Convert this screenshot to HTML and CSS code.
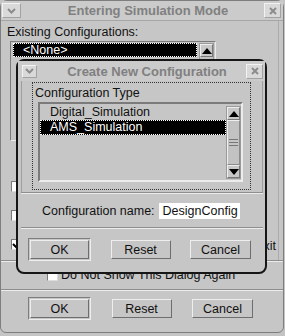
FILE: index.html
```html
<!DOCTYPE html>
<html lang="en">
<head>
    <meta charset="UTF-8">
    <title>Entering Simulation Mode</title>
    <link rel="stylesheet" href="styles.css">
</head>
<body>
    <div class="window outer">
        <div class="titlebar">
            <span class="tb-btn wide">
                <svg width="9" height="6" viewBox="0 0 9 6"><path d="M1 1l3.5 3.5L8 1" stroke="#8c8c8c" stroke-width="2" fill="none"/></svg>
            </span>
            <span class="tb-title">Entering Simulation Mode</span>
            <span class="tb-btn">
                <svg width="8" height="8" viewBox="0 0 8 8"><path d="M1 1l6 6M7 1L1 7" stroke="#8c8c8c" stroke-width="2"/></svg>
            </span>
        </div>

        <div class="panel">
            <div class="label">Existing Configurations:</div>
            <div class="listbox outer-list">
                <div class="rows">
                    <div class="row sel">&lt;None&gt;</div>
                </div>
                <div class="scrollbar">
                    <span class="arrow"><span class="tri up"></span></span>
                </div>
            </div>

            <!-- these rows sit under the second dialog, only the end of the last label peeks out -->
            <div class="checks">
                <div class="check-row"><span class="checkbox"></span></div>
                <div class="check-row"><span class="checkbox"></span></div>
                <div class="check-row"><span class="checkbox on"><svg width="9" height="9" viewBox="0 0 9 9"><path d="M1 4l3 3 4-6" stroke="#000" stroke-width="2" fill="none"/></svg></span><span class="check-label">Exit</span></div>
            </div>
        </div>

        <div class="sep"></div>
        <div class="check-row again"><span class="checkbox"></span><span>Do Not Show This Dialog Again</span></div>
        <div class="sep"></div>

        <div class="buttons outer-buttons">
            <span class="default"><button class="btn">OK</button></span>
            <button class="btn">Reset</button>
            <button class="btn wide">Cancel</button>
        </div>

        <!-- Create New Configuration dialog, on top of the first one -->
        <div class="window inner">
            <div class="titlebar">
                <span class="tb-btn small">
                    <svg width="9" height="6" viewBox="0 0 9 6"><path d="M1 1l3.5 3.5L8 1" stroke="#8c8c8c" stroke-width="2" fill="none"/></svg>
                </span>
                <span class="tb-title">Create New Configuration</span>
                <span class="tb-btn">
                    <svg width="8" height="8" viewBox="0 0 8 8"><path d="M1 1l6 6M7 1L1 7" stroke="#8c8c8c" stroke-width="2"/></svg>
                </span>
            </div>

            <div class="inner-body">
                <div class="section types">
                    <div class="group">
                        <div class="group-label">Configuration Type</div>
                        <div class="listbox type-list">
                            <div class="rows">
                                <div class="row">Digital_Simulation</div>
                                <div class="row sel">AMS_Simulation</div>
                            </div>
                            <div class="scrollbar">
                                <span class="arrow"><span class="tri up"></span></span>
                                <span class="thumb"><span class="grip"></span></span>
                                <span class="arrow"><span class="tri down"></span></span>
                            </div>
                        </div>
                    </div>
                </div>
                <div class="sep"></div>
                <div class="section name-row">
                    <span>Configuration name:</span>
                    <span class="field">DesignConfig</span>
                </div>
                <div class="sep"></div>
                <div class="buttons inner-buttons">
                    <span class="default"><button class="btn">OK</button></span>
                    <button class="btn">Reset</button>
                    <button class="btn wide">Cancel</button>
                </div>
            </div>
        </div>
    </div>
</body>
</html>
```

FILE: styles.css
```css
/* General Reset */
* {
    margin: 0;
    padding: 0;
    box-sizing: border-box;
}

body {
    font-family: "Liberation Sans", Arial, sans-serif;
    font-size: 12.5px;
    color: #111;
    background-color: #c4c4c4;
}

/* Windows */
.window {
    background-color: #c6c6c6;
}

.outer {
    position: relative;
    width: 284px;
    height: 333px;
    border: 1px solid #7e7e7e;
    border-radius: 7px 7px 6px 6px;
}

.inner {
    position: absolute;
    left: 15px;
    top: 58px;
    width: 251px;
    height: 215px;
    border: 2px solid #161616;
    border-radius: 8px;
}

/* Title bars */
.titlebar {
    display: flex;
    align-items: center;
    height: 20px;
    padding: 0 2px 0 1px;
    background-color: #cbcbcb;
}

.outer > .titlebar {
    border-bottom: 1px solid #a6a6a6;
}

.inner .titlebar {
    padding: 0 2px 0 4px;
}

.tb-btn {
    display: flex;
    align-items: center;
    justify-content: center;
    width: 17px;
    height: 15px;
    background-color: #d9d9d9;
    border: 1px solid;
    border-color: #f2f2f2 #a2a2a2 #a2a2a2 #f2f2f2;
}

.tb-btn.wide {
    width: 19px;
}

.tb-btn.small {
    width: 15px;
    height: 13px;
}

.tb-title {
    flex: 1;
    text-align: center;
    padding-left: 11px;
    font-size: 13px;
    font-weight: bold;
    color: #808080;
}

/* Outer dialog body */
.panel {
    width: 278px;
    height: 239px;
    border-right: 1px solid #ababab;
}

.label {
    padding: 4px 0 0 6px;
    line-height: 14px;
}

.sep {
    height: 2px;
    border-top: 1px solid #8e8e8e;
    border-bottom: 1px solid #ececec;
}

/* List boxes */
.listbox {
    display: flex;
    border: 1px solid;
    border-color: #7b7b7b #ececec #ececec #7b7b7b;
}

.rows {
    flex: 1;
}

.row {
    height: 15px;
    line-height: 15px;
    padding-left: 10px;
    white-space: nowrap;
}

.row.sel {
    background-color: #000;
    color: #fff;
    outline: 1px dotted #fff;
    outline-offset: -1px;
}

.outer-list {
    width: 206px;
    height: 100px;
    margin: 2px 0 0 9px;
    padding: 1px 1px 1px 2px;
}

.outer-list .row {
    height: 14px;
    line-height: 14px;
}

.scrollbar {
    display: flex;
    flex-direction: column;
    width: 15px;
    border: 1px solid #9a9a9a;
    background-color: #c2c2c2;
}

.outer-list .scrollbar {
    margin-left: 2px;
}

.arrow {
    display: flex;
    align-items: center;
    justify-content: center;
    height: 13px;
    border: 1px solid;
    border-color: #eeeeee #777 #777 #eeeeee;
    background-color: #c8c8c8;
}

.tri {
    width: 0;
    height: 0;
    border-left: 5px solid transparent;
    border-right: 5px solid transparent;
}

.tri.up {
    border-bottom: 6px solid #000;
}

.tri.down {
    border-top: 6px solid #000;
}

.thumb {
    flex: 1;
    display: flex;
    align-items: center;
    justify-content: center;
    border: 1px solid;
    border-color: #eeeeee #8a8a8a #8a8a8a #eeeeee;
}

.grip {
    width: 9px;
    height: 7px;
    border-top: 1px solid #777;
    border-bottom: 1px solid #777;
    background: linear-gradient(#c6c6c6 2px, #777 2px, #777 3px, #c6c6c6 3px);
}

/* Check boxes */
.checks {
    display: flex;
    flex-direction: column;
    gap: 18px;
    margin-top: 40px;
    padding-left: 10px;
}

.check-row {
    display: flex;
    align-items: center;
    gap: 3px;
    height: 11px;
    white-space: nowrap;
}

.check-label {
    flex: 1;
    text-align: right;
    padding-right: 2px;
    line-height: 14px;
    padding-top: 3px;
}

.checkbox {
    display: flex;
    align-items: center;
    justify-content: center;
    flex: none;
    width: 11px;
    height: 11px;
    background-color: #fff;
    border: 1px solid;
    border-color: #7b7b7b #dddddd #dddddd #7b7b7b;
}

.again {
    height: 12px;
    margin: 7px 0 8px;
    padding-left: 46px;
}

/* Buttons */
.buttons {
    display: flex;
    align-items: center;
    justify-content: space-between;
}

.outer-buttons {
    margin-top: 6px;
    padding: 0 30px 0 27px;
}

.default {
    display: flex;
    padding: 1px;
    border: 1px solid;
    border-color: #7e7e7e #eeeeee #eeeeee #7e7e7e;
}

.btn {
    width: 60px;
    height: 19px;
    font: inherit;
    color: #111;
    background-color: #c6c6c6;
    border: 1px solid;
    border-color: #eeeeee #6e6e6e #6e6e6e #eeeeee;
}

.default .btn {
    width: 59px;
}

.btn.wide {
    width: 61px;
}

/* Inner dialog body */
.inner-body {
    padding: 0 2px 0 3px;
}

.section.types {
    height: 111px;
    padding-top: 1px;
    border-left: 1px solid #9f9f9f;
    border-right: 1px solid #9f9f9f;
}

.group {
    width: 219px;
    height: 108px;
    margin-left: 10px;
    border: 1px dotted #333;
}

.group-label {
    padding: 3px 0 0 2px;
    line-height: 14px;
}

.type-list {
    width: 205px;
    height: 80px;
    margin: 2px 0 0 5px;
    border-width: 2px;
    padding-top: 1px;
}

.type-list .scrollbar {
    margin: 1px 0 1px;
}

.name-row {
    display: flex;
    align-items: center;
    gap: 4px;
    height: 33px;
    padding-left: 21px;
}

.field {
    width: 81px;
    height: 16px;
    line-height: 16px;
    padding-left: 4px;
    background-color: #fff;
    overflow: hidden;
    white-space: nowrap;
}

.inner-buttons {
    height: 43px;
    align-items: flex-start;
    padding: 9px 12px 0 7px;
}

.inner-buttons .btn {
    margin-top: 2px;
}

.inner-buttons .default .btn {
    margin-top: 0;
}
```
